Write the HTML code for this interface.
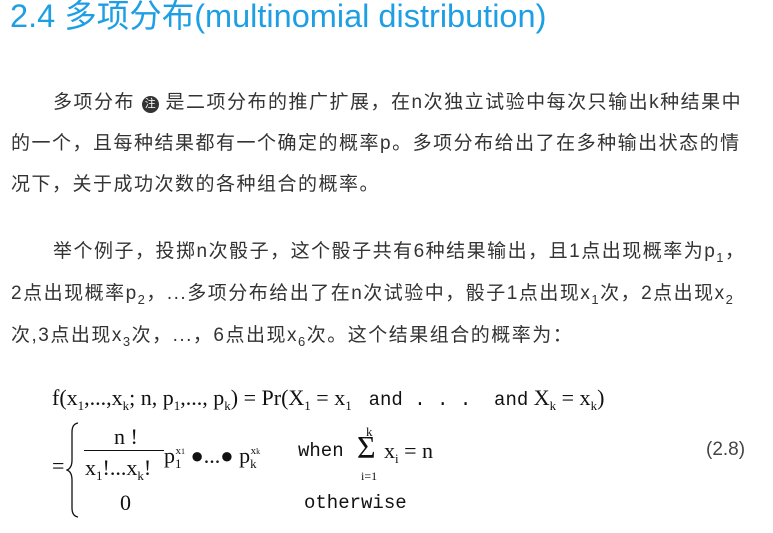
<!DOCTYPE html>
<html><head><meta charset="utf-8"><style>
html,body{margin:0;padding:0;background:#fff;width:773px;height:533px;overflow:hidden;position:relative}
.t{position:absolute;white-space:nowrap;font-family:"Liberation Sans","Noto Sans CJK SC",sans-serif;color:#333;font-size:19px;letter-spacing:1.5px;line-height:22px}
.h{position:absolute;left:10px;top:-3px;font-family:"Liberation Sans","Noto Sans CJK SC",sans-serif;color:#1e9fe4;font-size:32.5px;line-height:38px;white-space:nowrap}
.m{position:absolute;white-space:nowrap;font-family:"Liberation Serif","Noto Serif CJK SC",serif;color:#111;font-size:22px;line-height:24px}
.mono{font-family:"Liberation Mono",monospace;font-size:19px}
sub{font-size:13px;vertical-align:-5px}
sup{font-size:11px;vertical-align:9px}
.note{display:inline-block;width:17px;height:17px;border-radius:50%;background:#333;color:#fff;font-size:11px;line-height:17px;text-align:center;vertical-align:1px;letter-spacing:0}
</style></head><body>
<div class="h">2.4 多项分布(multinomial distribution)</div>

<div class="t" style="left:53px;top:92px">多项分布 <span class="note">注</span> 是二项分布的推广扩展，在n次独立试验中每次只输出k种结果中</div>
<div class="t" style="left:11px;top:133px">的一个，且每种结果都有一个确定的概率p。多项分布给出了在多种输出状态的情</div>
<div class="t" style="left:11px;top:174px">况下，关于成功次数的各种组合的概率。</div>

<div class="t" style="left:53px;top:241px">举个例子，投掷n次骰子，这个骰子共有6种结果输出，且1点出现概率为p<sub>1</sub>，</div>
<div class="t" style="left:11px;top:283px">2点出现概率p<sub>2</sub>，...多项分布给出了在n次试验中，骰子1点出现x<sub>1</sub>次，2点出现x<sub>2</sub></div>
<div class="t" style="left:11px;top:325px">次,3点出现x<sub>3</sub>次，...，6点出现x<sub>6</sub>次。这个结果组合的概率为：</div>

<div class="m" style="left:52px;top:386px">f(x<sub>1</sub>,...,x<sub>k</sub>; n, p<sub>1</sub>,..., p<sub>k</sub>) = Pr(X<sub>1</sub> = x<sub>1</sub> <span class="mono">&nbsp;and . . . &nbsp;and</span> X<sub>k</sub> = x<sub>k</sub>)</div>
<div class="m" style="left:52px;top:454px">=</div>
<svg style="position:absolute;left:66px;top:422px" width="16" height="96" viewBox="0 0 16 96"><path d="M12 1 Q6 2 6 10 L6 38 Q6 46 1 48 Q6 50 6 58 L6 86 Q6 94 12 95" fill="none" stroke="#111" stroke-width="1.3"/></svg>
<div class="m" style="left:114px;top:425px">n !</div>
<div style="position:absolute;left:84px;top:450px;width:80px;height:1.3px;background:#111"></div>
<div class="m" style="left:85px;top:456px">x<sub>1</sub>!...x<sub>k</sub>!</div>
<div class="m" style="left:164px;top:439px">p<sub>1</sub><sup style="margin-left:-6px">x<span style="font-size:8px">1</span></sup> &#9679;...&#9679; p<sub>k</sub><sup style="margin-left:-6px">x<span style="font-size:8px">k</span></sup></div>
<div class="m mono" style="left:298px;top:439px">when</div>
<div class="m" style="left:366px;top:420px;font-size:13px">k</div>
<div class="m" style="left:357px;top:430px;font-size:32px;line-height:34px">&Sigma;</div>
<div class="m" style="left:361px;top:464px;font-size:12px">i=1</div>
<div class="m" style="left:384px;top:439px">x<sub>i</sub> = n</div>
<div class="m" style="left:120px;top:491px">0</div>
<div class="m mono" style="left:304px;top:491px">otherwise</div>
<div class="t" style="left:706px;top:439px;color:#444;letter-spacing:0">(2.8)</div>
</body></html>
